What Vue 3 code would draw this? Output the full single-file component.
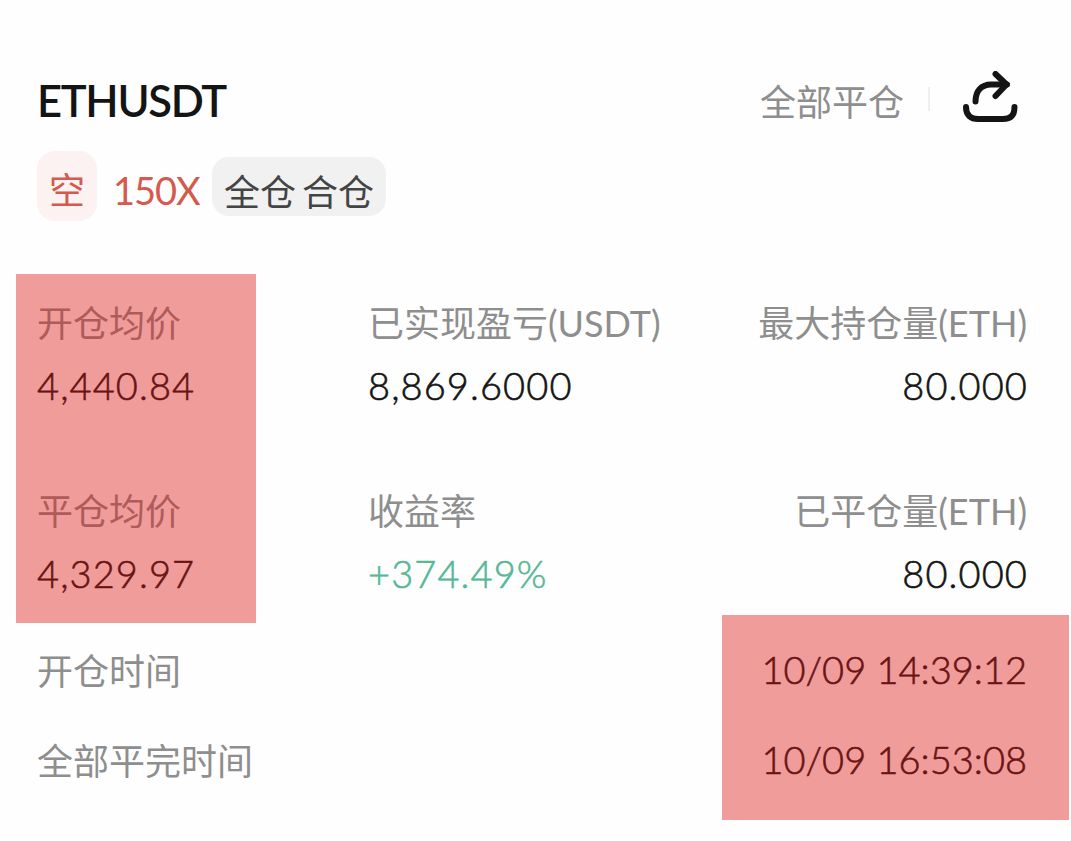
<script setup>
const rows = [
  [
    { label: "开仓均价", value: "4,440.84" },
    { label: "已实现盈亏(USDT)", value: "8,869.6000" },
    { label: "最大持仓量(ETH)", value: "80.000" },
  ],
  [
    { label: "平仓均价", value: "4,329.97" },
    { label: "收益率", value: "+374.49%", type: "profit" },
    { label: "已平仓量(ETH)", value: "80.000" },
  ],
];

const times = [
  { label: "开仓时间", value: "10/09 14:39:12" },
  { label: "全部平完时间", value: "10/09 16:53:08" },
];
</script>

<template>
  <div class="card">
    <header class="header">
      <h1 class="header__title">ETHUSDT</h1>
      <span class="header__status">全部平仓</span>
      <span class="header__divider"></span>
      <svg class="header__share" width="56" height="54" viewBox="0 0 56 54">
        <path d="M3 36C3 44.500 8 48 15 48H40C47.500 48 51.500 44.500 51.500 36" />
        <path d="M12.500 30.500C12.500 20 18.500 13.500 28 13.500H44" />
        <path d="M32.500 3L43.500 13.500L32.500 25" />
      </svg>
    </header>

    <div class="tags">
      <span class="tags__side">空</span>
      <span class="tags__leverage">150X</span>
      <span class="tags__mode"><span>全仓</span><span>合仓</span></span>
    </div>

    <div class="stats">
      <div v-for="(row, index) in rows" :key="index" class="stats__row">
        <div v-for="item in row" :key="item.label" class="stats__item">
          <div class="label">{{ item.label }}</div>
          <div class="value" :class="item.type">{{ item.value }}</div>
        </div>
      </div>
    </div>

    <div class="times">
      <div v-for="item in times" :key="item.label" class="times__row">
        <span class="label">{{ item.label }}</span>
        <span class="value times__value">{{ item.value }}</span>
      </div>
    </div>

    <div class="marker marker--prices"></div>
    <div class="marker marker--times"></div>
  </div>
</template>

<style>
body {
  margin: 0;
  background: #fefefe;
}
</style>

<style scoped>
.card {
  position: relative;
  box-sizing: border-box;
  width: 1071px;
  height: 841px;
  padding: 71px 44px 0 37px;
  overflow: hidden;
  background: #fefefe;
  color: #141414;
  font-family: Lato, "Noto Sans CJK SC", sans-serif;
  white-space: nowrap;
}
.header {
  display: flex;
  height: 56px;
}
.header__title {
  margin: 0;
  flex-grow: 1;
  font-size: 43.5px;
  font-weight: 600;
  line-height: 58px;
  letter-spacing: -1.3px;
}
.header__status {
  font-size: 36px;
  line-height: 63px;
  color: #8e8e8e;
}
.header__divider {
  width: 2px;
  height: 24px;
  margin: 16px 33px 0 24px;
  background: #eee;
}
.header__share {
  margin-right: 8px;
  fill: none;
  stroke: #141414;
  stroke-width: 6;
  stroke-linecap: round;
  stroke-linejoin: round;
}
.tags {
  display: flex;
  height: 70px;
  margin-top: 24px;
}
.tags__side {
  width: 60px;
  border-radius: 18px;
  background: #fdf2f2;
  color: #d35a4c;
  font-size: 36px;
  line-height: 79px;
  text-align: center;
}
.tags__leverage {
  width: 99px;
  margin-left: 16px;
  color: #d35a4c;
  font-size: 38px;
  line-height: 78px;
  letter-spacing: -1px;
}
.tags__mode {
  display: flex;
  justify-content: center;
  gap: 6px;
  width: 174px;
  height: 59px;
  margin-top: 6px;
  border-radius: 17px;
  background: #f1f1f1;
  color: #444;
  font-size: 36px;
  line-height: 70px;
}
.stats {
  display: flex;
  flex-direction: column;
  gap: 78px;
  margin-top: 78px;
}
.stats__row {
  display: grid;
  grid-template-columns: 331px 330px 1fr;
}
.stats__item:last-child {
  text-align: right;
}
.label {
  font-size: 36px;
  line-height: 48px;
  color: #8e8e8e;
}
.value {
  margin-top: 14px;
  font-size: 38px;
  font-weight: 300;
  line-height: 48px;
  letter-spacing: 1.1px;
  /* Light is a touch too thin for the figures, Regular too heavy */
  -webkit-text-stroke: 0.6px currentColor;
}
.stats__item:last-child .value {
  margin-right: -1px;
}
.profit {
  color: #56b896;
}
.times {
  display: flex;
  flex-direction: column;
  gap: 42px;
  margin-top: 50px;
}
.times__row {
  display: flex;
  justify-content: space-between;
}
.times__value {
  margin-top: -2px;
  letter-spacing: 0;
}
/* highlighter blocks painted over the figures */
.marker {
  position: absolute;
  background: rgba(219, 22, 18, 0.42);
}
.marker--prices {
  left: 16px;
  top: 274px;
  width: 240px;
  height: 349px;
}
.marker--times {
  left: 722px;
  top: 615px;
  width: 347px;
  height: 205px;
}
</style>
